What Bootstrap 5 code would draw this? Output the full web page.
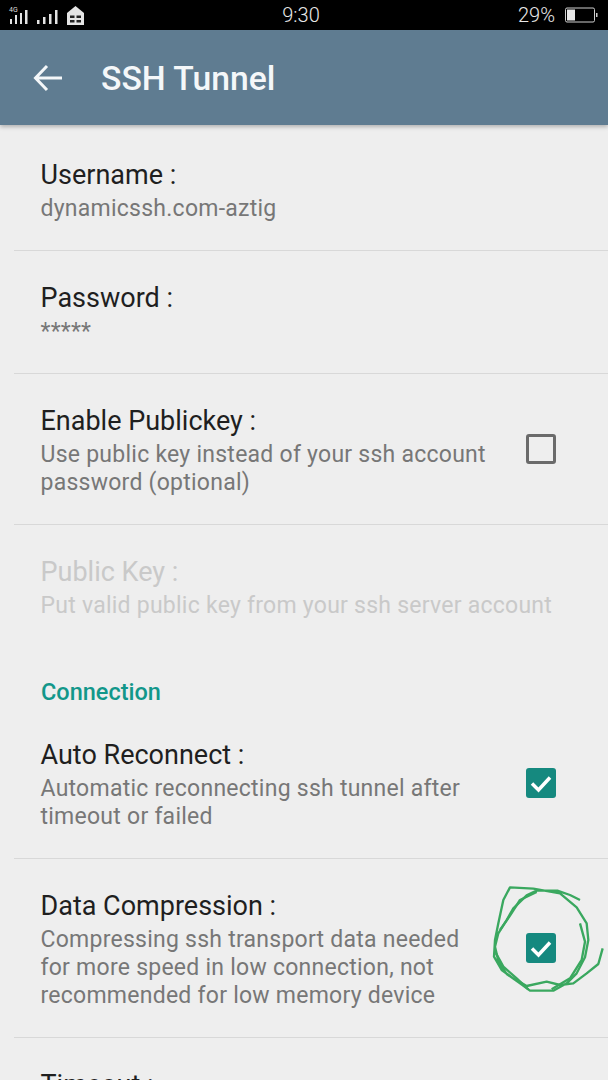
<!DOCTYPE html>
<html lang="en">
<head>
    <meta charset="UTF-8">
    <meta name="viewport" content="width=device-width, initial-scale=1.0">
    <title>SSH Tunnel</title>
    <link href="https://cdn.jsdelivr.net/npm/bootstrap@5.3.0/dist/css/bootstrap.min.css" rel="stylesheet">
    <style>
        html, body {
            height: 1080px;
            overflow: hidden;
        }
        body {
            background-color: #eeeeee;
            font-family: Roboto, "Liberation Sans", sans-serif;
        }
        .phone {
            position: relative;
            height: 1080px;
            overflow: hidden;
        }
        .status-bar {
            height: 30px;
            background-color: #000;
            color: #e8e8e8;
            padding: 0 8px;
        }
        .status-side {
            width: 220px;
        }
        .status-side.left-side {
            width: 214px;
        }
        .status-time {
            font-size: 20px;
            font-weight: 300;
            line-height: 30px;
        }
        .status-pct {
            font-size: 20px;
            font-weight: 300;
            line-height: 30px;
        }
        .net-label {
            position: absolute;
            left: 9px;
            top: 7px;
            font-size: 7px;
            line-height: 7px;
            color: #ddd;
        }
        .app-bar {
            height: 95px;
            background-color: #5f7c91;
            color: #f4f7f9;
            padding-left: 33px;
            box-shadow: 0 2px 4px rgba(0, 0, 0, .25);
            position: relative;
        }
        .app-title {
            font-size: 33.7px;
            font-weight: 500;
            margin: 3px 0 0 39px;
            line-height: 40px;
        }
        .pref-list {
            padding-top: 3px;
        }
        .pref-row {
            padding: 30px 0 27px 26.5px;
            margin-left: 14px;
            border-bottom: 1px solid #d8d8d8;
        }
        .pref-row.plain {
            border-bottom: 0;
            padding-bottom: 0;
        }
        .pref-name {
            font-size: 27px;
            line-height: 34px;
            color: #1f1f1f;
        }
        .pref-note {
            font-size: 23px;
            line-height: 28px;
            color: #777;
            margin-top: 3px;
            letter-spacing: .25px;
        }
        .pref-row.off .pref-name,
        .pref-row.off .pref-note {
            color: #c9c9c9;
        }
        .pref-text {
            width: 450px;
            flex: none;
        }
        .section-head {
            font-size: 23.5px;
            font-weight: 500;
            line-height: 30px;
            color: #12978a;
            margin: 57px 0 1px 41px;
        }
        .tick-box {
            width: 30px;
            height: 30px;
            border-radius: 3px;
            flex: none;
            margin-left: 35px;
            margin-top: -3px;
        }
        .tick-box.empty {
            border: 3px solid #6a6a6a;
        }
        .tick-box.full {
            background-color: #15897f;
        }
        .scribble {
            position: absolute;
            left: 470px;
            top: 870px;
            width: 138px;
            height: 135px;
        }
    </style>
</head>
<body>
    <div class="phone">
        <!-- Status bar -->
        <div class="status-bar d-flex align-items-center justify-content-between position-relative">
            <div class="status-side left-side d-flex align-items-center">
                <span class="net-label">4G</span>
                <svg width="78" height="30" viewBox="0 0 78 30" fill="#e4e4e4">
                    <rect x="2" y="19" width="2" height="5"/>
                    <rect x="7" y="15" width="2" height="9"/>
                    <rect x="12" y="13" width="2" height="11"/>
                    <rect x="17" y="10" width="2.5" height="14"/>
                    <rect x="29" y="20" width="2.5" height="4"/>
                    <rect x="35" y="17" width="2.5" height="7"/>
                    <rect x="41" y="14" width="2.5" height="10"/>
                    <rect x="47" y="10" width="2.5" height="14"/>
                    <path d="M59 13 67.500 6 76 13V25H59Z"/>
                    <path d="M62 15.500H66.500V18H62ZM68.500 15.500H73V18H68.500ZM62 20H66.500V22.500H62ZM68.500 20H73V22.500H68.500Z" fill="#222"/>
                </svg>
            </div>
            <div class="status-time">9:30</div>
            <div class="status-side d-flex align-items-center justify-content-end">
                <span class="status-pct">29%</span>
                <svg class="ms-2" width="37" height="30" viewBox="0 0 37 30">
                    <rect x="2.500" y="8" width="29" height="14" rx="1.500" fill="none" stroke="#cfcfcf"/>
                    <rect x="4" y="9.500" width="8" height="11" fill="#e8e8e8"/>
                    <rect x="33" y="13" width="1.500" height="4" fill="#cfcfcf"/>
                </svg>
            </div>
        </div>

        <!-- App bar -->
        <div class="app-bar d-flex align-items-center">
            <svg width="29" height="28" viewBox="0 0 29 28" fill="none" stroke="#f4f7f9" stroke-width="3">
                <path d="M29 14H3M14 2 2.500 14 14 26"/>
            </svg>
            <h1 class="app-title">SSH Tunnel</h1>
        </div>

        <!-- Settings list -->
        <div class="pref-list">
            <div class="pref-row">
                <div class="pref-name">Username :</div>
                <div class="pref-note">dynamicssh.com-aztig</div>
            </div>
            <div class="pref-row">
                <div class="pref-name">Password :</div>
                <div class="pref-note">*****</div>
            </div>
            <div class="pref-row d-flex align-items-center">
                <div class="pref-text">
                    <div class="pref-name">Enable Publickey :</div>
                    <div class="pref-note">Use public key instead of your ssh account password (optional)</div>
                </div>
                <div class="tick-box empty"></div>
            </div>
            <div class="pref-row plain off">
                <div class="pref-name">Public Key :</div>
                <div class="pref-note">Put valid public key from your ssh server account</div>
            </div>

            <div class="section-head">Connection</div>

            <div class="pref-row d-flex align-items-center">
                <div class="pref-text">
                    <div class="pref-name">Auto Reconnect :</div>
                    <div class="pref-note">Automatic reconnecting ssh tunnel after timeout or failed</div>
                </div>
                <div class="tick-box full">
                    <svg width="30" height="30" viewBox="0 0 30 30" fill="none" stroke="#fff" stroke-width="3.500"><path d="M6 15.500 12.500 22 24 9.500"/></svg>
                </div>
            </div>
            <div class="pref-row d-flex align-items-center">
                <div class="pref-text">
                    <div class="pref-name">Data Compression :</div>
                    <div class="pref-note">Compressing ssh transport data needed for more speed in low connection, not recommended for low memory device</div>
                </div>
                <div class="tick-box full">
                    <svg width="30" height="30" viewBox="0 0 30 30" fill="none" stroke="#fff" stroke-width="3.500"><path d="M6 15.500 12.500 22 24 9.500"/></svg>
                </div>
            </div>
            <div class="pref-row plain">
                <div class="pref-name">Timeout :</div>
            </div>
        </div>

        <!-- Green pen annotation around the checkbox -->
        <svg class="scribble" viewBox="0 0 414 405" fill="none" stroke="#3aa85f" stroke-width="7" stroke-linejoin="round">
            <path d="M330 90 300 75 262 62 200 62 170 76 130 115 110 150 85 190 75 230 85 272 110 312 150 340 180 362 250 362 290 340 320 310 345 262 355 210 350 160 320 112 270 70 190 56 120 52 100 90 85 160 75 210 72 260 95 300 130 325 170 348 230 335 270 345 310 340 350 310 385 282 398 235"/>
            <path d="M78 250 100 290 140 325 175 358M200 66 150 90 118 140 90 180M330 160 345 215 335 270 300 325 245 358"/>
        </svg>
    </div>

    <script src="https://cdn.jsdelivr.net/npm/bootstrap@5.3.0/dist/js/bootstrap.bundle.min.js"></script>
</body>
</html>
